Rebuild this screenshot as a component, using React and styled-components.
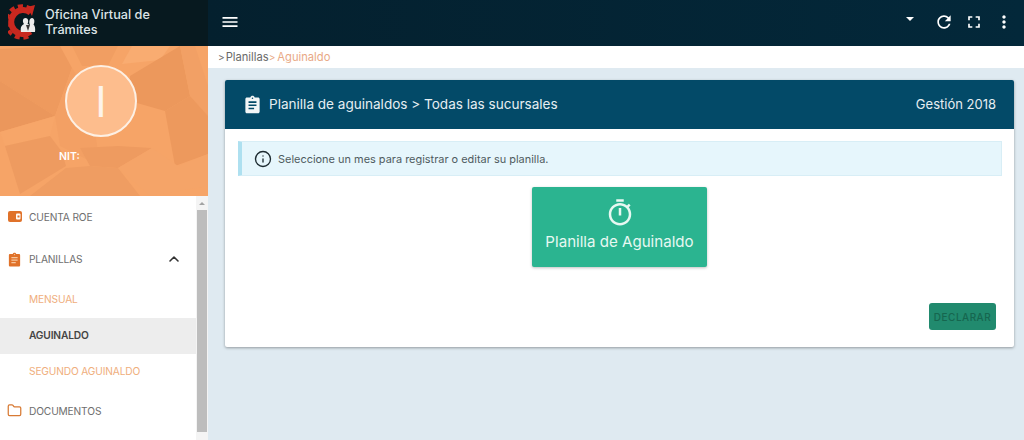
import React from 'react';
import styled, { createGlobalStyle } from 'styled-components';
import { ChevronUp, Folder, Info } from 'lucide-react';

const GlobalStyle = createGlobalStyle`
  html, body {
    margin: 0;
    padding: 0;
    height: 100%;
    overflow: hidden;
    font-family: Inter, "Open Sans", "Liberation Sans", sans-serif;
  }
  #root { height: 100%; }
`;

const Page = styled.div`
  display: grid;
  grid-template-columns: 208px 1fr;
  grid-template-rows: 46px 1fr;
  width: 1024px;
  height: 440px;
  background: #dfeaf1;
  overflow: hidden;
`;

const Brand = styled.div`
  display: flex;
  align-items: center;
  gap: 7px;
  padding: 0 0 2px 8px;
  background: #07191f;
`;

const BrandText = styled.div`
  color: #dce3e6;
  font-size: 12.7px;
  line-height: 15.5px;
  font-weight: 500;
  width: 130px;
`;

const TopBar = styled.div`
  display: flex;
  align-items: center;
  padding: 0 10px 2px 12px;
  background: linear-gradient(90deg, #04202e, #03283a);
  color: #fff;
`;

const Spacer = styled.div`
  flex: 1;
`;

const TopActions = styled.div`
  display: flex;
  align-items: center;
  gap: 10px;
`;

const Caret = styled.div`
  width: 0;
  height: 0;
  margin-right: 10px;
  margin-bottom: 6px;
  border-left: 4px solid transparent;
  border-right: 4px solid transparent;
  border-top: 4px solid #fff;
`;

const Sidebar = styled.aside`
  display: flex;
  flex-direction: column;
  min-height: 0;
  background: #fff;
`;

const Profile = styled.div`
  position: relative;
  display: flex;
  flex-direction: column;
  align-items: center;
  height: 150px;
  flex: none;
  padding: 19px 6px 0 0;
  box-sizing: border-box;
  background: #f6a467;
  overflow: hidden;
`;

const ProfileArt = styled.svg`
  position: absolute;
  inset: 0;
`;

const Avatar = styled.div`
  position: relative;
  width: 72px;
  height: 72px;
  box-sizing: border-box;
  border: 2px solid #fdf0e4;
  border-radius: 50%;
  background: #fdbd8d;
  display: flex;
  align-items: center;
  justify-content: center;
  color: #fdf3ea;
  font-size: 42px;
  font-weight: 400;
`;

const Nit = styled.div`
  position: relative;
  align-self: flex-start;
  margin: 13px 0 0 59px;
  color: #fff;
  font-size: 10.5px;
  font-weight: 600;
`;

const NavArea = styled.div`
  flex: 1;
  display: grid;
  grid-template-columns: 1fr 12px;
  min-height: 0;
`;

const NavList = styled.nav`
  display: flex;
  flex-direction: column;
  min-width: 0;
`;

const NavItem = styled.div`
  display: flex;
  align-items: center;
  gap: 7px;
  height: ${props => props.$h || 42}px;
  padding: 0 14px 0 7px;
  color: #6e6e6e;
  font-size: 10.2px;
  letter-spacing: -0.15px;
  svg { flex: none; }
`;

const NavIcon = styled.span`
  display: flex;
  justify-content: center;
  width: 15px;
  flex: none;
`;

const SubList = styled.div`
  display: flex;
  flex-direction: column;
  padding-top: 2px;
`;

const SubItem = styled.div`
  display: flex;
  align-items: center;
  height: 36px;
  box-sizing: border-box;
  padding: 0 0 2px 29px;
  font-size: 10.2px;
  letter-spacing: -0.15px;
  font-weight: ${props => props.$active ? 600 : 400};
  color: ${props => props.$active ? '#444' : '#efae7c'};
  background: ${props => props.$active ? '#ededed' : 'transparent'};
`;

const ScrollTrack = styled.div`
  display: flex;
  flex-direction: column;
  align-items: center;
  padding-right: 1px;
  background: #f4f4f4;
`;

const ScrollArrow = styled.div`
  height: 14px;
  flex: none;
  display: flex;
  align-items: center;
  &::before {
    content: '';
    border-left: 3px solid transparent;
    border-right: 3px solid transparent;
    border-bottom: 3px solid #a3a3a3;
  }
`;

const ScrollThumb = styled.div`
  width: 10px;
  height: 222px;
  background: #bdbdbd;
`;

const Main = styled.main`
  display: flex;
  flex-direction: column;
  min-width: 0;
`;

const Crumbs = styled.div`
  display: flex;
  align-items: center;
  height: 22px;
  padding-left: 10px;
  flex: none;
  background: #fff;
  color: #6a6a6a;
  font-size: 11.2px;
`;

const CrumbArrow = styled.span`
  font-size: 10px;
  margin-right: ${props => props.$gap}px;
  color: ${props => props.$soft ? '#e9a986' : '#6a6a6a'};
`;

const CrumbCurrent = styled.span`
  color: #e9a986;
`;

const Content = styled.div`
  padding: 12px 10px 0 17px;
`;

const Card = styled.section`
  display: flex;
  flex-direction: column;
  height: 267px;
  background: #fff;
  border-radius: 2px;
  box-shadow: 0 1px 3px rgba(0, 0, 0, 0.35);
`;

const CardHeader = styled.header`
  display: flex;
  align-items: center;
  height: 49px;
  flex: none;
  box-sizing: border-box;
  padding: 0 18px 1px;
  gap: 7px;
  background: #034a68;
  color: #e6eef2;
  border-radius: 2px 2px 0 0;
  font-size: 13.55px;
`;

const Gestion = styled.div`
  margin-left: auto;
  font-size: 13px;
`;

const CardBody = styled.div`
  flex: 1;
  display: flex;
  flex-direction: column;
  padding: 12px 12px 17px 13px;
`;

const Alert = styled.div`
  display: flex;
  align-items: center;
  gap: 6px;
  height: 35px;
  padding-left: 12px;
  box-sizing: border-box;
  background: #e6f6fc;
  border: 1px solid #d8eef6;
  border-left: 4px solid #aee0f0;
  color: #4f5b60;
  font-size: 10.95px;
`;

const BigButton = styled.button`
  align-self: center;
  display: flex;
  flex-direction: column;
  align-items: center;
  justify-content: center;
  gap: 4px;
  width: 175px;
  height: 80px;
  margin-top: 11px;
  margin-right: 1px;
  padding: 0 0 5px;
  border: 0;
  border-radius: 2px;
  background: #2bb490;
  color: #e7f8f2;
  font-family: inherit;
  font-size: 15.1px;
  box-shadow: 0 1px 3px rgba(0, 0, 0, 0.25);
`;

const Footer = styled.div`
  margin-top: auto;
  display: flex;
  justify-content: flex-end;
  padding-right: 6px;
`;

const Declare = styled.button`
  width: 67px;
  height: 27px;
  padding: 0;
  border: 0;
  border-radius: 3px;
  background: #218a6e;
  color: #16664f;
  font-family: inherit;
  font-size: 10px;
  font-weight: 500;
  letter-spacing: 0.5px;
`;

const facets = [
  ['0,3 60,0 72,22 55,70 0,35', '#ee9a5e'],
  ['0,35 55,70 0,86', '#eb975c'],
  ['0,86 55,70 50,90 5,100', '#f7a669'],
  ['5,100 50,90 62,106 66,120 20,148', '#ee9b60'],
  ['55,70 72,22 90,50 100,120 60,100', '#f3a064'],
  ['72,0 118,0 108,20 82,20', '#f19e62'],
  ['122,18 132,0 170,0 160,14', '#f9ac71'],
  ['130,30 180,0 190,50 165,65 130,55', '#ec985c'],
  ['180,0 195,0 208,40 208,70 190,50', '#f2a065'],
  ['165,65 190,50 208,70 208,108 175,120', '#ed995d'],
  ['80,102 118,100 152,102 118,122 90,120', '#ee9b60'],
  ['118,122 152,102 178,120 208,108 208,140 150,150', '#f5a468'],
  ['66,122 90,120 118,122 140,150 30,150', '#ef9d62'],
];

const Logo = () => (
  <svg width="30" height="36" viewBox="0 0 30 36">
    <g fill="none" stroke="#c9281f">
      <path d="M22.500 8.500 A12 12 0 1 0 22.500 27.500" strokeWidth="6" />
      <path d="M23 5 A15.800 15.800 0 1 0 23 31" strokeWidth="4" strokeDasharray="5 3.600" />
    </g>
    <path d="M19 3 L27 1 L24 12 Z" fill="#c9281f" />
    <path d="M13 28 C12 23 14 21 16 20 C14 17 15 14 17.500 14 C20 14 21 17 19.500 20 C21 20.500 21.500 21 22 21 C20.500 18 21.500 14 24 14 C26.500 14 27 18 25.500 20.500 C27 21.500 27.500 25 27 28 Z" fill="#ededed" />
    <path d="M18 21 L20 27 L22 21 Z" fill="#3a3a3a" />
  </svg>
);

const WalletIcon = () => (
  <svg width="14" height="12" viewBox="0 0 14 12">
    <rect width="14" height="11" rx="2" fill="#e0722a" />
    <rect x="8" y="2.500" width="4.500" height="6" rx="1" fill="#fff" />
    <rect x="9.500" y="4.500" width="2" height="2" fill="#e0722a" />
  </svg>
);

const ClipFilled = ({ size, color, ink }) => (
  <svg width={size} height={size} viewBox="0 0 24 24">
    <path
      d="M19 3h-4.200C14.400 1.800 13.300 1 12 1s-2.400.8-2.800 2H5c-1.100 0-2 .9-2 2v16c0 1.100.9 2 2 2h14c1.100 0 2-.9 2-2V5c0-1.100-.9-2-2-2z"
      fill={color}
    />
    <path d="M7 8h10v2H7zM7 12h10v2H7zM7 16h7v2H7z" fill={ink} />
    <circle cx="12" cy="4" r="1" fill={ink} />
  </svg>
);

const MaterialIcon = ({ d, size = 20 }) => (
  <svg width={size} height={size} viewBox="0 0 24 24" fill="currentColor">
    <path d={d} />
  </svg>
);

const Stopwatch = () => (
  <svg width="30" height="30" viewBox="0 0 24 24" fill="currentColor">
    <path d="M9 1h6v2H9zM11 8h2v6h-2z" />
    <path d="M19.030 7.390l1.420-1.420c-.43-.51-.9-.99-1.410-1.410l-1.420 1.420C16.070 4.740 14.120 4 12 4c-4.970 0-9 4.030-9 9s4.020 9 9 9 9-4.030 9-9c0-2.120-.74-4.070-1.970-5.610zM12 20c-3.870 0-7-3.130-7-7s3.130-7 7-7 7 3.130 7 7-3.130 7-7 7z" />
  </svg>
);

const ICONS = {
  menu: 'M3 18h18v-2H3v2zm0-5h18v-2H3v2zm0-7v2h18V6H3z',
  refresh: 'M17.650 6.350C16.200 4.900 14.210 4 12 4c-4.420 0-7.990 3.580-7.990 8s3.570 8 7.990 8c3.730 0 6.840-2.550 7.730-6h-2.080c-.82 2.330-3.040 4-5.650 4-3.310 0-6-2.690-6-6s2.690-6 6-6c1.660 0 3.140.69 4.220 1.780L13 11h7V4l-2.350 2.350z',
  fullscreen: 'M7 14H5v5h5v-2H7v-3zm-2-4h2V7h3V5H5v5zm12 7h-3v2h5v-5h-2v3zM14 5v2h3v3h2V5h-5z',
  more: 'M12 8c1.100 0 2-.9 2-2s-.9-2-2-2-2 .9-2 2 .9 2 2 2zm0 2c-1.100 0-2 .9-2 2s.9 2 2 2 2-.9 2-2-.9-2-2-2zm0 6c-1.100 0-2 .9-2 2s.9 2 2 2 2-.9 2-2-.9-2-2-2z',
};

const App = () => (
  <>
    <GlobalStyle />
    <Page>
      <Brand>
        <Logo />
        <BrandText>Oficina Virtual de Trámites</BrandText>
      </Brand>
      <TopBar>
        <MaterialIcon d={ICONS.menu} />
        <Spacer />
        <TopActions>
          <Caret />
          <MaterialIcon d={ICONS.refresh} />
          <MaterialIcon d={ICONS.fullscreen} />
          <MaterialIcon d={ICONS.more} />
        </TopActions>
      </TopBar>
      <Sidebar>
        <Profile>
          <ProfileArt width="208" height="150" viewBox="0 0 208 150">
            {facets.map(([points, fill]) => (
              <polygon key={points} points={points} fill={fill} />
            ))}
          </ProfileArt>
          <Avatar>I</Avatar>
          <Nit>NIT:</Nit>
        </Profile>
        <NavArea>
          <NavList>
            <NavItem>
              <NavIcon><WalletIcon /></NavIcon>
              CUENTA ROE
            </NavItem>
            <NavItem>
              <NavIcon><ClipFilled size={15} color="#e0722a" ink="#f6c79f" /></NavIcon>
              PLANILLAS
              <Spacer />
              <ChevronUp size={16} strokeWidth={2.4} color="#333" />
            </NavItem>
            <SubList>
              <SubItem>MENSUAL</SubItem>
              <SubItem $active>AGUINALDO</SubItem>
              <SubItem>SEGUNDO AGUINALDO</SubItem>
            </SubList>
            <NavItem $h={41}>
              <NavIcon><Folder size={15} color="#d87a34" strokeWidth={2} /></NavIcon>
              DOCUMENTOS
            </NavItem>
          </NavList>
          <ScrollTrack>
            <ScrollArrow />
            <ScrollThumb />
          </ScrollTrack>
        </NavArea>
      </Sidebar>
      <Main>
        <Crumbs>
          <CrumbArrow $gap={1}>&gt;</CrumbArrow>
          Planillas
          <CrumbArrow $soft $gap={2}>&gt;</CrumbArrow>
          <CrumbCurrent>Aguinaldo</CrumbCurrent>
        </Crumbs>
        <Content>
          <Card>
            <CardHeader>
              <ClipFilled size={19} color="#f2f6f7" ink="#034a68" />
              Planilla de aguinaldos &gt; Todas las sucursales
              <Gestion>Gestión 2018</Gestion>
            </CardHeader>
            <CardBody>
              <Alert>
                <Info size={18} color="#1c2a30" strokeWidth={1.8} />
                Seleccione un mes para registrar o editar su planilla.
              </Alert>
              <BigButton>
                <Stopwatch />
                Planilla de Aguinaldo
              </BigButton>
              <Footer>
                <Declare>DECLARAR</Declare>
              </Footer>
            </CardBody>
          </Card>
        </Content>
      </Main>
    </Page>
  </>
);

export default App;
